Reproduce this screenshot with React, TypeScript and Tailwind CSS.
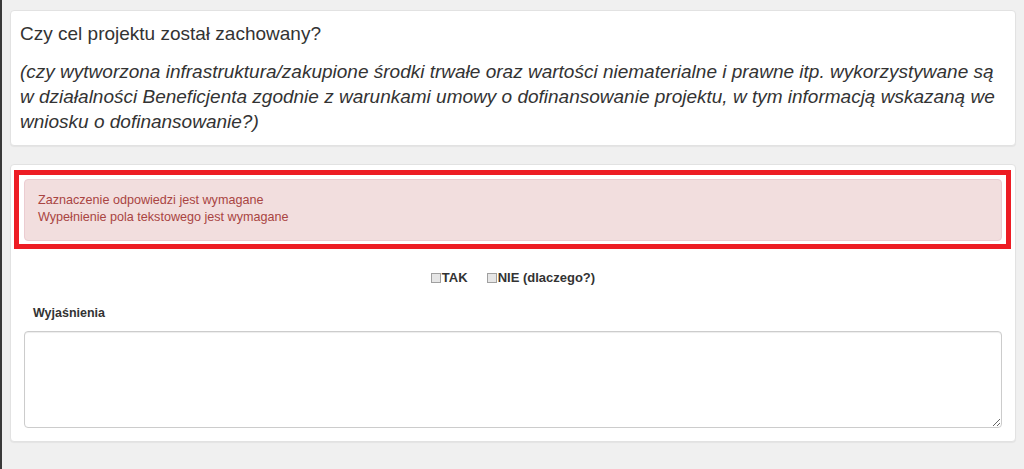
export default function App() {
  return (
    <div className="min-h-[469px] w-full border-l-2 border-[#3a3a3a] bg-[#f0f0f0] px-[8px] pt-[10px] pb-[26px] font-['Liberation_Sans',Arial,sans-serif] text-[#333]">
      <div className="rounded-[4px] border border-[#e2e2e2] bg-white px-[9px] pt-[13px] pb-[11px] shadow-[0_1px_1px_rgba(0,0,0,0.05)]">
        <h3 className="text-[19px] leading-[20px]">Czy cel projektu został zachowany?</h3>
        <p className="mt-[15px] text-[19px] leading-[25px] italic">
          (czy wytworzona infrastruktura/zakupione środki trwałe oraz wartości niematerialne i prawne itp.
          wykorzystywane są w działalności Beneficjenta zgodnie z warunkami umowy o dofinansowanie
          projektu, w tym informacją wskazaną we wniosku o dofinansowanie?)
        </p>
      </div>

      <div className="mt-[18px] rounded-[4px] border border-[#e2e2e2] bg-white px-[3px] pt-[5px] pb-[13px] text-[12.5px] shadow-[0_1px_1px_rgba(0,0,0,0.05)]">
        <div className="mr-px border-[5px] border-[#ed1c24] pt-[4px] pr-[4px] pb-[3px] pl-[5px]">
          <div className="rounded-[4px] border border-[#ebccd1] bg-[#f2dede] px-[13px] pt-[12px] pb-[14px] text-[12.6px] leading-[17px] text-[#a94442]">
            <div>Zaznaczenie odpowiedzi jest wymagane</div>
            <div>Wypełnienie pola tekstowego jest wymagane</div>
          </div>
        </div>

        <div className="px-[10px]">
          <div className="mt-[20px] flex justify-center gap-[19px] text-[13px] leading-[17px] font-bold">
            <label className="flex items-center">
              <span className="mr-px inline-block size-[10px] border border-[#a0a0a0] bg-[#e6e6e6]" />
              TAK
            </label>
            <label className="flex items-center">
              <span className="mr-px inline-block size-[10px] border border-[#a0a0a0] bg-[#e6e6e6]" />
              NIE (dlaczego?)
            </label>
          </div>

          <div className="mt-[19px] pl-[9px] leading-[17px] font-bold">Wyjaśnienia</div>

          <textarea className="mt-[9px] block h-[97px] w-full resize-y rounded-[4px] border border-[#ccc] bg-white px-3 py-1.5 shadow-[inset_0_1px_1px_rgba(0,0,0,0.075)] outline-none" />
        </div>
      </div>
    </div>
  )
}
